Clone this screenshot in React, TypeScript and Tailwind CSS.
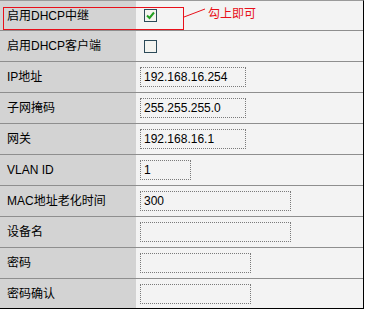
import React from "react";

type Row = {
  label: string;
  kind: "check" | "input";
  checked?: boolean;
  value?: string;
  width?: string;
};

const rows: Row[] = [
  { label: "启用DHCP中继", kind: "check", checked: true },
  { label: "启用DHCP客户端", kind: "check", checked: false },
  { label: "IP地址", kind: "input", value: "192.168.16.254", width: "w-[106px]" },
  { label: "子网掩码", kind: "input", value: "255.255.255.0", width: "w-[106px]" },
  { label: "网关", kind: "input", value: "192.168.16.1", width: "w-[106px]" },
  { label: "VLAN ID", kind: "input", value: "1", width: "w-[51px]" },
  { label: "MAC地址老化时间", kind: "input", value: "300", width: "w-[151px]" },
  { label: "设备名", kind: "input", value: "", width: "w-[151px]" },
  { label: "密码", kind: "input", value: "", width: "w-[111px]" },
  { label: "密码确认", kind: "input", value: "", width: "w-[111px]" },
];

function CheckBox({ checked }: { checked?: boolean }) {
  return (
    <div className="flex h-[13px] w-[13px] items-center justify-center border border-[#2c4a58] bg-[#f4f4f0]">
      {checked && (
        <svg width="9" height="9" viewBox="0 0 9 9">
          <path d="M1 4.5 L3.5 7 L8 1.5" fill="none" stroke="#22a022" strokeWidth="2" />
        </svg>
      )}
    </div>
  );
}

function FieldRow({ row, index }: { row: Row; index: number }) {
  const isFirst = index === 0;
  const isLast = index === rows.length - 1;
  const height = isFirst ? "h-[29px]" : isLast ? "h-[30px] border-t border-[#8e8e8e]" : "h-[31px] border-t border-[#8e8e8e]";
  return (
    <div className={`flex ${height}`}>
      <div className="flex w-[136px] items-center bg-[#d3d3d3] pl-[7px]">{row.label}</div>
      <div className="flex flex-1 items-center bg-[#f3f3f3] pl-[4px]">
        {row.kind === "check" ? (
          <div className="pl-[4px]">
            <CheckBox checked={row.checked} />
          </div>
        ) : (
          <div className={`flex h-[20px] items-center border border-dotted border-[#7a7a7a] pl-[3px] ${row.width}`}>
            {row.value}
          </div>
        )}
      </div>
    </div>
  );
}

export default function App() {
  return (
    <div className="relative h-[309px] w-[365px] overflow-hidden bg-white text-[12px] leading-none text-black [font-family:'Liberation_Sans','Noto_Sans_CJK_SC',sans-serif]">
      <div className="w-[364px] border-t border-r border-b border-t-[#9a9a9a] border-r-black border-b-black">
        {rows.map((row, i) => (
          <FieldRow key={row.label} row={row} index={i} />
        ))}
      </div>

      {/* annotation */}
      <div className="absolute left-[3px] top-[7px] h-[23px] w-[181px] border border-[#e8101a]" />
      <svg className="absolute left-0 top-0" width="365" height="40">
        <line x1="184" y1="17" x2="205" y2="9" stroke="#e8101a" strokeWidth="1" />
      </svg>
      <div className="absolute left-[208px] top-[8px] text-[#e8101a]">勾上即可</div>
    </div>
  );
}
